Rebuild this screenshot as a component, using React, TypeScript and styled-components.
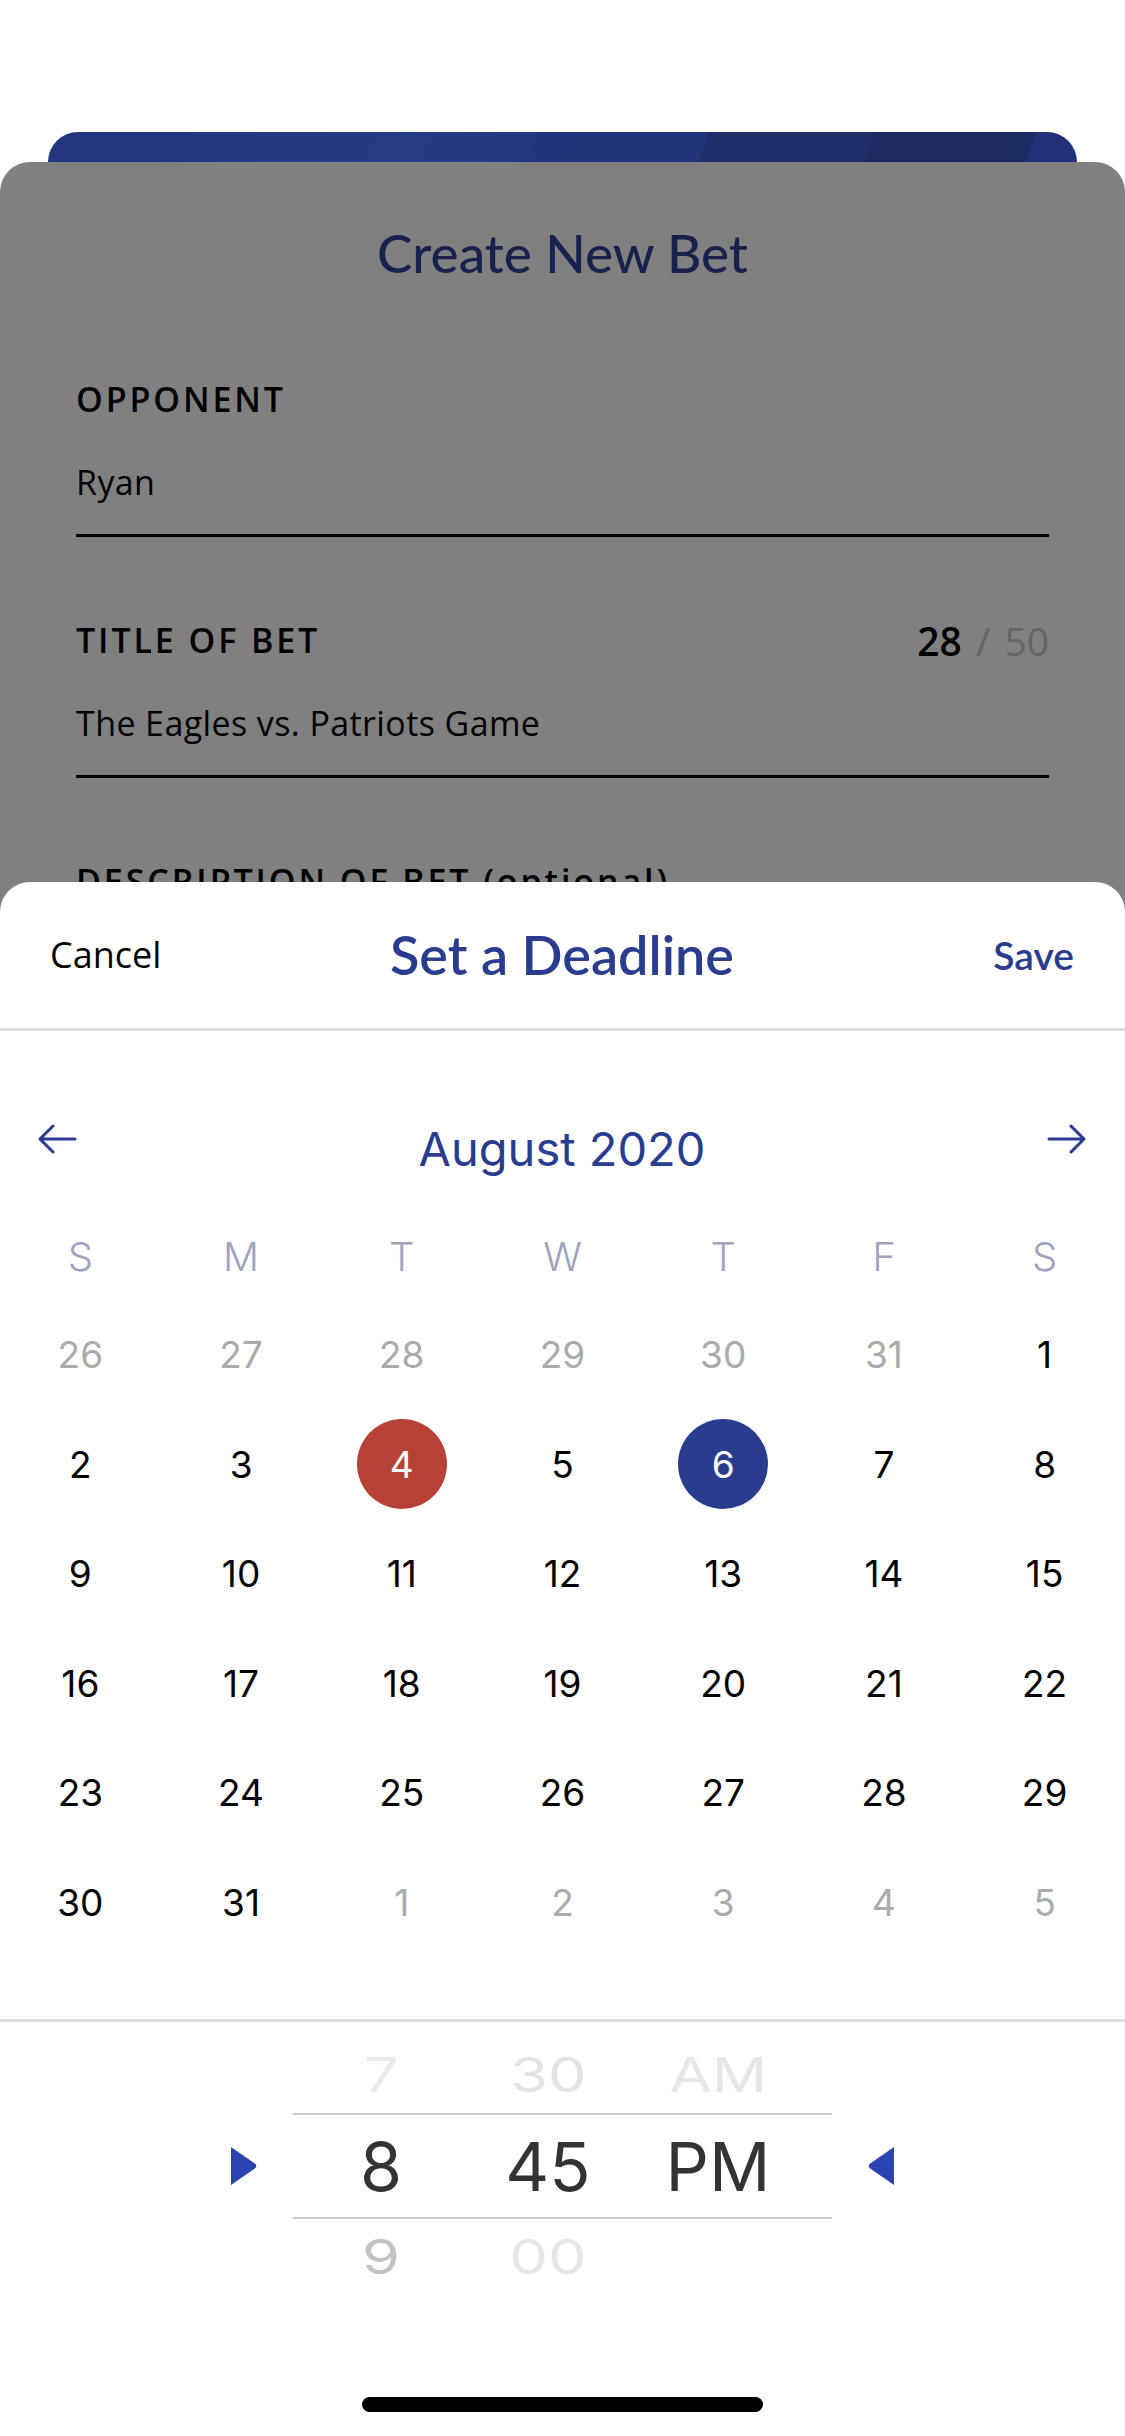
import React from "react";
import styled, { createGlobalStyle } from "styled-components";

const GlobalStyle = createGlobalStyle`
  html, body {
    margin: 0;
    padding: 0;
    background: #ffffff;
  }
  body {
    width: 1125px;
    height: 2436px;
    overflow: hidden;
    font-family: "Open Sans", "Liberation Sans", sans-serif;
  }
  #root {
    width: 1125px;
    height: 2436px;
  }
  * { box-sizing: content-box; }
`;

const NAVY = "#2a3c8e";

const Screen = styled.div`
  position: relative;
  width: 1125px;
  height: 2436px;
  overflow: hidden;
  background: #ffffff;
  display: flex;
  flex-direction: column;
`;

const StatusSpace = styled.div`
  flex: none;
  height: 132px;
`;

const BackCard = styled.div`
  flex: none;
  height: 30px;
  margin: 0 48px 0 48px;
  border-radius: 30px 30px 0 0;
  background: linear-gradient(
    108deg,
    #22367d 0%,
    #263b85 35%,
    #24387f 47%,
    #22357c 47.2%,
    #22347a 63.5%,
    #1f2d69 63.7%,
    #1f2d69 79.5%,
    #1c2a61 79.7%,
    #1c2a62 95%,
    #21327b 95.2%,
    #21327b 100%
  );
`;

const FormCard = styled.div`
  flex: 1;
  background: #808080;
  border-radius: 30px 30px 0 0;
  padding: 0 76px;
  display: flex;
  flex-direction: column;
`;

const FormTitle = styled.h1`
  margin: 0 0 37px;
  height: 180px;
  display: flex;
  align-items: center;
  justify-content: center;
  font-family: Lato, "Open Sans", sans-serif;
  font-weight: 500;
  font-size: 53px;
  line-height: 1;
  color: #18224f;
`;

const Field = styled.div`
  display: flex;
  flex-direction: column;
  margin-bottom: 83px;
`;

const LabelRow = styled.div`
  height: 40px;
  display: flex;
  align-items: center;
  justify-content: space-between;
`;

const Label = styled.span`
  font-family: "Open Sans", sans-serif;
  font-weight: 600;
  font-size: 34px;
  letter-spacing: 2.9px;
  line-height: 1;
  color: #000;
`;

const Counter = styled.span`
  font-family: "Open Sans", sans-serif;
  font-size: 39px;
  line-height: 1;
  word-spacing: 4px;
  color: #666;
`;

const CounterValue = styled.b`
  font-weight: 600;
  color: #000;
`;

const Value = styled.div`
  margin-top: 43px;
  height: 40px;
  display: flex;
  align-items: center;
  font-family: "Open Sans", sans-serif;
  font-size: 34px;
  letter-spacing: 0.4px;
  line-height: 1;
  color: #000;
`;

const Underline = styled.div`
  margin-top: 32px;
  height: 3px;
  background: #000;
`;

const Sheet = styled.div`
  position: absolute;
  top: 882px;
  left: 0;
  right: 0;
  bottom: 0;
  background: #ffffff;
  border-radius: 30px 30px 0 0;
  display: flex;
  flex-direction: column;
`;

const SheetHeader = styled.header`
  height: 146px;
  padding: 0 51px 0 50px;
  display: grid;
  grid-template-columns: 1fr auto 1fr;
  align-items: center;
  border-bottom: 3px solid #dedede;
`;

const HeaderButton = styled.button<{ $primary?: boolean }>`
  border: 0;
  background: none;
  padding: 0;
  justify-self: ${(p) => (p.$primary ? "end" : "start")};
  font-family: ${(p) => (p.$primary ? 'Lato, "Open Sans", sans-serif' : '"Open Sans", sans-serif')};
  font-weight: ${(p) => (p.$primary ? 600 : 400)};
  font-size: ${(p) => (p.$primary ? "39px" : "36px")};
  line-height: 1;
  color: ${(p) => (p.$primary ? NAVY : "#000")};
`;

const SheetTitle = styled.h2`
  margin: 0;
  font-family: Lato, "Open Sans", sans-serif;
  font-weight: 600;
  font-size: 54px;
  line-height: 1;
  color: ${NAVY};
`;

const MonthRow = styled.div`
  margin-top: 87px;
  height: 60px;
  padding: 0 38px 0 37px;
  display: flex;
  align-items: center;
  justify-content: space-between;
`;

const ArrowButton = styled.button`
  border: 0;
  background: none;
  padding: 0;
  width: 40px;
  height: 30px;
  margin-bottom: 18px;
  display: flex;
`;

const MonthTitle = styled.div`
  font-family: Inter, "Liberation Sans", sans-serif;
  font-size: 47px;
  line-height: 1;
  color: ${NAVY};
`;

const WeekGrid = styled.div`
  margin-top: 49px;
  height: 60px;
  display: grid;
  grid-template-columns: repeat(7, 1fr);
  align-items: center;
  justify-items: center;
`;

const WeekDay = styled.span`
  font-family: Inter, "Liberation Sans", sans-serif;
  font-weight: 300;
  font-size: 40px;
  line-height: 1;
  color: #9ea2bb;
`;

const DateGrid = styled.div`
  margin-top: 13px;
  display: grid;
  grid-template-columns: repeat(7, 1fr);
  grid-auto-rows: 109.5px;
  align-items: center;
  justify-items: center;
`;

type DayKind = "muted" | "normal" | "today" | "selected";

const Day = styled.span<{ $kind: DayKind }>`
  width: 90px;
  height: 90px;
  border-radius: 50%;
  display: flex;
  align-items: center;
  justify-content: center;
  font-family: Inter, "Liberation Sans", sans-serif;
  font-size: 37px;
  line-height: 1;
  color: ${(p) =>
    p.$kind === "muted" ? "#ababab" : p.$kind === "normal" ? "#000" : "#fff"};
  background: ${(p) =>
    p.$kind === "today" ? "#b64134" : p.$kind === "selected" ? NAVY : "transparent"};
`;

const TimeSection = styled.div`
  margin-top: 62px;
  border-top: 3px solid #dedede;
  display: flex;
  justify-content: center;
  align-items: center;
  gap: 36px;
`;

const Wheel = styled.div`
  width: 539px;
  display: flex;
  flex-direction: column;
`;

const WheelRow = styled.div<{ $pos: "above" | "center" | "below" }>`
  display: grid;
  grid-template-columns: 176px 158px 182px;
  justify-items: center;
  align-items: center;
  height: ${(p) => (p.$pos === "center" ? "102px" : "76px")};
  padding: ${(p) =>
    p.$pos === "above" ? "15px 0 0" : p.$pos === "below" ? "0 0 14px" : "0"};
  border-top: ${(p) => (p.$pos === "center" ? "2px solid #cfcfcf" : "0")};
  border-bottom: ${(p) => (p.$pos === "center" ? "2px solid #cfcfcf" : "0")};
`;

const WheelText = styled.span<{ $fade?: string }>`
  font-family: Inter, "Liberation Sans", sans-serif;
  font-size: 68px;
  line-height: 1;
  color: ${(p) => p.$fade ?? "#333"};
  transform: ${(p) => (p.$fade ? "scale(0.9, 0.7)" : "none")};
`;

const HomeIndicator = styled.div`
  margin: auto auto 24px;
  width: 401px;
  height: 15px;
  border-radius: 8px;
  background: #000;
`;

const ArrowIcon = ({ flip }: { flip?: boolean }) => (
  <svg
    width="40"
    height="30"
    viewBox="0 0 40 30"
    style={flip ? { transform: "scaleX(-1)" } : undefined}
  >
    <path
      d="M38 15H3M16 2L3 15l13 13"
      fill="none"
      stroke={NAVY}
      strokeWidth="3"
      strokeLinecap="round"
      strokeLinejoin="round"
    />
  </svg>
);

const Triangle = ({ flip }: { flip?: boolean }) => (
  <svg
    width="26"
    height="38"
    viewBox="0 0 26 38"
    style={flip ? { transform: "scaleX(-1)" } : undefined}
  >
    <path d="M0 0L24.5 17Q26 19 24.5 21L0 38Z" fill="#2a45b0" />
  </svg>
);

const weeks: [number, DayKind][][] = [
  [[26, "muted"], [27, "muted"], [28, "muted"], [29, "muted"], [30, "muted"], [31, "muted"], [1, "normal"]],
  [[2, "normal"], [3, "normal"], [4, "today"], [5, "normal"], [6, "selected"], [7, "normal"], [8, "normal"]],
  [[9, "normal"], [10, "normal"], [11, "normal"], [12, "normal"], [13, "normal"], [14, "normal"], [15, "normal"]],
  [[16, "normal"], [17, "normal"], [18, "normal"], [19, "normal"], [20, "normal"], [21, "normal"], [22, "normal"]],
  [[23, "normal"], [24, "normal"], [25, "normal"], [26, "normal"], [27, "normal"], [28, "normal"], [29, "normal"]],
  [[30, "normal"], [31, "normal"], [1, "muted"], [2, "muted"], [3, "muted"], [4, "muted"], [5, "muted"]],
];

const weekDays = ["S", "M", "T", "W", "T", "F", "S"];

export default function App() {
  return (
    <>
      <GlobalStyle />
      <Screen>
        <StatusSpace />
        <BackCard />
        <FormCard>
          <FormTitle>Create New Bet</FormTitle>
          <Field>
            <LabelRow>
              <Label>OPPONENT</Label>
            </LabelRow>
            <Value>Ryan</Value>
            <Underline />
          </Field>
          <Field>
            <LabelRow>
              <Label>TITLE OF BET</Label>
              <Counter>
                <CounterValue>28</CounterValue> / 50
              </Counter>
            </LabelRow>
            <Value>The Eagles vs. Patriots Game</Value>
            <Underline />
          </Field>
          <Field>
            <LabelRow>
              <Label>DESCRIPTION OF BET (optional)</Label>
            </LabelRow>
          </Field>
        </FormCard>

        <Sheet>
          <SheetHeader>
            <HeaderButton>Cancel</HeaderButton>
            <SheetTitle>Set a Deadline</SheetTitle>
            <HeaderButton $primary>Save</HeaderButton>
          </SheetHeader>

          <MonthRow>
            <ArrowButton aria-label="Previous month">
              <ArrowIcon />
            </ArrowButton>
            <MonthTitle>August 2020</MonthTitle>
            <ArrowButton aria-label="Next month">
              <ArrowIcon flip />
            </ArrowButton>
          </MonthRow>

          <WeekGrid>
            {weekDays.map((d, i) => (
              <WeekDay key={i}>{d}</WeekDay>
            ))}
          </WeekGrid>

          <DateGrid>
            {weeks.flat().map(([n, kind], i) => (
              <Day key={i} $kind={kind}>
                {n}
              </Day>
            ))}
          </DateGrid>

          <TimeSection>
            <Triangle />
            <Wheel>
              <WheelRow $pos="above">
                <WheelText $fade="#e9e9e9">7</WheelText>
                <WheelText $fade="#e3e3e3">30</WheelText>
                <WheelText $fade="#e6e6e6">AM</WheelText>
              </WheelRow>
              <WheelRow $pos="center">
                <WheelText>8</WheelText>
                <WheelText>45</WheelText>
                <WheelText>PM</WheelText>
              </WheelRow>
              <WheelRow $pos="below">
                <WheelText $fade="#c2c2c2">9</WheelText>
                <WheelText $fade="#e6e6e6">00</WheelText>
                <span />
              </WheelRow>
            </Wheel>
            <Triangle flip />
          </TimeSection>

          <HomeIndicator />
        </Sheet>
      </Screen>
    </>
  );
}
